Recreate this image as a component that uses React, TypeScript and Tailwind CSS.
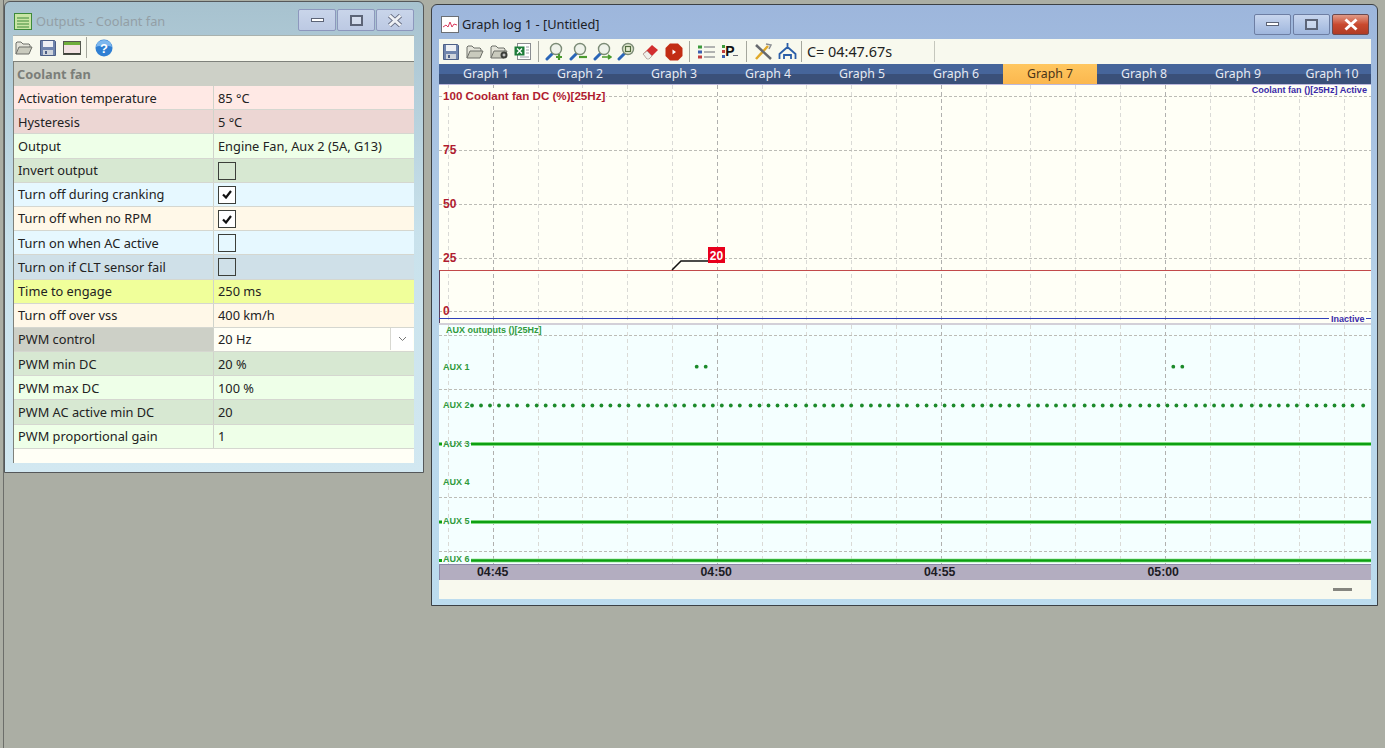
import React from 'react';

const uiFont = 'font-["Noto_Sans",sans-serif]';

type Row = { label: string; value?: string; check?: boolean; bgL: string; bgR?: string; select?: boolean };

const rows: Row[] = [
  { label: 'Activation temperature', value: '85 °C', bgL: 'bg-[#ffe9e5]' },
  { label: 'Hysteresis', value: '5 °C', bgL: 'bg-[#ecd6d3]' },
  { label: 'Output', value: 'Engine Fan, Aux 2 (5A, G13)', bgL: 'bg-[#eeffe8]' },
  { label: 'Invert output', check: false, bgL: 'bg-[#d7e8d2]' },
  { label: 'Turn off during cranking', check: true, bgL: 'bg-[#e6f8ff]' },
  { label: 'Turn off when no RPM', check: true, bgL: 'bg-[#fff8e8]' },
  { label: 'Turn on when AC active', check: false, bgL: 'bg-[#e6f8ff]' },
  { label: 'Turn on if CLT sensor fail', check: false, bgL: 'bg-[#cfe0e8]' },
  { label: 'Time to engage', value: '250 ms', bgL: 'bg-[#f0ff9a]' },
  { label: 'Turn off over vss', value: '400 km/h', bgL: 'bg-[#fff8e8]' },
  { label: 'PWM control', value: '20 Hz', bgL: 'bg-[#cdd0c7]', bgR: 'bg-[#fffff6]', select: true },
  { label: 'PWM min DC', value: '20 %', bgL: 'bg-[#d7e8d2]' },
  { label: 'PWM max DC', value: '100 %', bgL: 'bg-[#eeffe8]' },
  { label: 'PWM AC active min DC', value: '20', bgL: 'bg-[#d7e8d2]' },
  { label: 'PWM proportional gain', value: '1', bgL: 'bg-[#eeffe8]' },
];

const FolderIcon = ({ plus }: { plus?: boolean }) => (
  <svg width="18" height="18" viewBox="0 0 18 18">
    <path d="M1 15V4l1-1h4l2 2h6l1 1v2" fill="#e4e4da" stroke="#6d6f68" />
    <path d="M1 15l3-7h13l-3 7z" fill="#c9cabd" stroke="#6d6f68" />
    {plus && <circle cx="14" cy="12" r="3.5" fill="#3d3f3a" />}
    {plus && <path d="M12.5 12h3M14 10.5v3" stroke="#eee" />}
  </svg>
);

const SaveIcon = () => (
  <svg width="18" height="18" viewBox="0 0 18 18">
    <path d="M1.5 1.5h14l1 1v14h-15z" fill="#6f84ad" stroke="#4d5f86" />
    <rect x="4" y="2" width="10" height="6" fill="#eef0f4" />
    <rect x="4" y="11" width="10" height="5" fill="#cfd4dc" />
    <rect x="6" y="12" width="2" height="3" fill="#4d5f86" />
  </svg>
);

const GridIcon = () => (
  <svg width="18" height="18" viewBox="0 0 18 18">
    <rect x="0.5" y="2.5" width="17" height="13" fill="#f2e2e2" stroke="#55584f" />
    <rect x="1" y="3" width="16" height="3" fill="#6fae3c" />
    <rect x="1" y="14" width="16" height="1.5" fill="#3d4038" />
  </svg>
);

const HelpIcon = () => (
  <svg width="18" height="18" viewBox="0 0 18 18">
    <circle cx="9" cy="9" r="8.5" fill="#2f7fd3" />
    <path d="M1 8a8 7 0 0 1 16 0c-4-2-12-2-16 0z" fill="#7db7ee" />
    <text x="9" y="13.5" textAnchor="middle" fontSize="13" fontWeight="700" fill="#fff" fontFamily="Liberation Sans">?</text>
  </svg>
);

const ZoomIcon = ({ mark }: { mark: 'plus' | 'minus' | 'arrows' | 'box' }) => (
  <svg width="19" height="19" viewBox="0 0 19 19">
    <path d="M2 17l6-6" stroke="#2a66b8" strokeWidth="3" strokeLinecap="round" />
    <circle cx="11" cy="7" r="5.5" fill={mark === 'box' ? '#e5ecd2' : '#eef2ea'} stroke="#7b8b76" strokeWidth="1.4" />
    {mark === 'plus' && <path d="M11 15h6M14 12v6" stroke="#4a9a2e" strokeWidth="2.2" />}
    {mark === 'minus' && <path d="M10 15h8" stroke="#4a9a2e" strokeWidth="2.2" />}
    {mark === 'arrows' && <path d="M9 15h9M15 13l3 2-3 2" stroke="#4a9a2e" strokeWidth="1.6" fill="none" />}
    {mark === 'box' && <rect x="8.5" y="4.5" width="5" height="5" fill="none" stroke="#4f6b3d" strokeWidth="1.2" />}
  </svg>
);

// toolbar cell, keeps the 24px pitch the icons sit on
const Slot = ({ children }: { children: React.ReactNode }) => <div className="w-[24px] shrink-0 flex items-center">{children}</div>;

const WinBtn = ({ kind, active }: { kind: 'min' | 'max' | 'close'; active: boolean }) => {
  const bg =
    kind === 'close' && active
      ? 'bg-linear-to-b from-[#e09a88] via-[#c9492f] to-[#b03b25] border-[#6b4a50]'
      : active
        ? 'bg-linear-to-b from-[#c8d6ee] to-[#9fb6dd] border-[#6d7ea3]'
        : 'bg-linear-to-b from-[#c9d5ea] to-[#bcc9e3] border-[#8d97bd]';
  const size = active ? 'w-[37px] h-[21px]' : 'w-[38px] h-[22px]';
  return (
    <div className={`flex items-center justify-center ${size} border rounded-[2px] ${bg}`}>
      {kind === 'min' && <div className="w-[13px] h-[4px] bg-white border border-[#5c6477]" />}
      {kind === 'max' && <div className="w-[13px] h-[11px] bg-white/30 border-2 border-[#5c6477]" />}
      {kind === 'close' && (
        <svg width="16" height="13" viewBox="0 0 16 13">
          {!active && <path d="M2.5 1.5l11 10M13.5 1.5l-11 10" stroke="#666d82" strokeWidth="4.6" />}
          <path d="M2.5 1.5l11 10M13.5 1.5l-11 10" stroke={active ? '#fff' : '#eef0f4'} strokeWidth="3" />
        </svg>
      )}
    </div>
  );
};

const Checkbox = ({ on }: { on: boolean }) => (
  <div className={`w-[18px] h-[18px] border border-[#3c3f3a] flex items-center justify-center ${on ? 'bg-white' : ''}`}>
    {on && (
      <svg width="10" height="9" viewBox="0 0 10 9">
        <path d="M1 4.5l3 3 5-6.5" fill="none" stroke="#111" strokeWidth="2.2" />
      </svg>
    )}
  </div>
);

const OutputsWindow = () => (
  <div className={`absolute left-[4px] top-[1px] w-[420px] h-[472px] rounded-t-[6px] border border-[#55585a] bg-linear-to-b from-[#a7c2cf] via-[#c9e2ec] to-[#d2e8f1] pl-[8px] pr-[9px] flex flex-col ${uiFont}`}>
    <div className="h-[33px] flex items-center shrink-0 pt-[6px]">
      <svg width="18" height="17" viewBox="0 0 18 17" className="ml-[1px]">
        <rect x="0.5" y="0.5" width="17" height="16" fill="#c9e6a5" stroke="#3e8a3a" />
        <path d="M3 5h12M3 8h12M3 11h12M3 14h12" stroke="#3e8a3a" />
      </svg>
      <span className="ml-[4px] text-[12.8px] text-[#939fa6]">Outputs - Coolant fan</span>
      <div className="ml-auto flex gap-[1px] -mt-[3px]">
        <WinBtn kind="min" active={false} />
        <WinBtn kind="max" active={false} />
        <WinBtn kind="close" active={false} />
      </div>
    </div>
    <div className="h-[26px] bg-[#f8f9ee] flex items-center pl-[2px] pb-[2px] border-t border-[#a9b2ae] shrink-0">
      <Slot><FolderIcon /></Slot>
      <Slot><SaveIcon /></Slot>
      <Slot><GridIcon /></Slot>
      <div className="w-px h-[21px] bg-[#a5a79d] mr-[8px] -ml-[1px]" />
      <HelpIcon />
    </div>
    <div className="flex-1 bg-[#fffff6] border-l border-t border-[#7e817b] mb-[9px] min-h-0 text-[12.8px] text-[#222]">
      <div className="h-[24px] bg-[#cdd0c7] flex items-center pl-[3px] pt-[1px] font-bold text-[#7b7e79]">Coolant fan</div>
      {rows.map((r) => (
        <div key={r.label} className="flex h-[24.2px] border-b border-[#d5d7d0]">
          <div className={`w-[200px] shrink-0 pl-[4px] pt-[1px] flex items-center border-r border-[#d0d3cb] ${r.bgL}`}>{r.label}</div>
          <div className={`flex-1 pl-[4px] pt-[1px] flex items-center ${r.bgR ?? r.bgL}`}>
            {r.check !== undefined ? <Checkbox on={r.check} /> : r.value}
            {r.select && (
              <div className="ml-auto mr-[1px] w-[23px] h-[22px] -mt-[1px] bg-white border-l border-[#d8d8d2] flex items-center justify-center">
                <svg width="9" height="6" viewBox="0 0 9 6">
                  <path d="M1 1l3.5 3.5L8 1" fill="none" stroke="#777" />
                </svg>
              </div>
            )}
          </div>
        </div>
      ))}
    </div>
  </div>
);

const vGrid = Array.from({ length: 21 }, (_, i) => Math.round(9 + i * 44.8) + 0.5);
const majors = [54.5, 278.5, 502.5, 726.5];

const VLines = ({ h }: { h: number }) => (
  <>
    {vGrid.map((x) => (
      <line key={x} x1={x} x2={x} y1={0} y2={h} stroke="#dadad6" strokeDasharray="4 3" />
    ))}
    {majors.map((x) => (
      <line key={x} x1={x} x2={x} y1={0} y2={h} stroke="#b0b0ae" strokeDasharray="4 3" />
    ))}
  </>
);

const HLine = ({ y }: { y: number }) => <line x1={0} x2={932} y1={y} y2={y} stroke="#bcbcb6" strokeDasharray="3 2" />;

const UpperChart = () => (
  <svg width="932" height="238" viewBox="0 0 932 238" className="block bg-[#fffff6] shrink-0" fontFamily="Liberation Sans">
    <VLines h={238} />
    {[11.5, 65.5, 119.5, 173.5, 226.5].map((y) => (
      <HLine key={y} y={y} />
    ))}
    <rect x={3} y={3} width={164} height={15} fill="#fffff6" />
    <text x={4} y={15} fontSize="11.6" fontWeight="700" fill="#b01c30">100 Coolant fan DC (%)[25Hz]</text>
    {[['75', 69], ['50', 123], ['25', 177], ['0', 230]].map(([t, y]) => (
      <text key={t} x={4} y={y as number} fontSize="12" fontWeight="700" fill="#b01c30">{t}</text>
    ))}
    <rect x={810} y={0} width={122} height={10} fill="#fffff6" />
    <text x={928} y={8} textAnchor="end" fontSize="9.1" fontWeight="700" fill="#3a2aa8">Coolant fan ()[25Hz] Active</text>
    <path d="M0 185.5H932" fill="none" stroke="#c24a4a" />
    <path d="M0.5 185.5V238" fill="none" stroke="#5b4060" />
    <path d="M233 185l9-9h27" fill="none" stroke="#111" strokeWidth="1.5" />
    <rect x={269} y={162} width={17} height={16} fill="#e8001c" />
    <text x={277.5} y={174.5} textAnchor="middle" fontSize="12" fontWeight="700" fill="#fff">20</text>
    <path d="M0 233.5H890M927 233.5H932" stroke="#2f3fb8" strokeWidth="1.2" />
    <text x={892} y={236.5} fontSize="9" fontWeight="700" fill="#3a2aa8">Inactive</text>
  </svg>
);

// every sixth gap in the AUX 2 trace is a little wider
const aux2Dots = Array.from({ length: 97 }, (_, i) => 33 + Math.floor(i / 6) * 55.7 + (i % 6) * 9);

const LowerChart = () => (
  <svg width="932" height="239" viewBox="0 0 932 239" className="block bg-[#f4ffff] shrink-0" fontFamily="Liberation Sans">
    <VLines h={239} />
    {[10.5, 64.5, 118.5, 172.5, 226.5].map((y) => (
      <HLine key={y} y={y} />
    ))}
    <text x={7} y={7.5} fontSize="9" fontWeight="700" fill="#2f9a3c">AUX outuputs ()[25Hz]</text>
    {[['AUX 1', 45], ['AUX 2', 83], ['AUX 3', 122], ['AUX 4', 160], ['AUX 5', 199], ['AUX 6', 237]].map(([t, y]) => (
      <text key={t} x={4} y={y as number} fontSize="9" fontWeight="700" fill="#2f9a3c">{t}</text>
    ))}
    {[257.7, 266.7, 734.3, 743.3].map((x) => (
      <circle key={x} cx={x} cy={41.7} r={1.9} fill="#1b8a2a" />
    ))}
    {aux2Dots.map((x) => (
      <circle key={x} cx={x} cy={80.5} r={1.9} fill="#1b8a2a" />
    ))}
    {[119, 197, 235.5].map((y) => (
      <g key={y}>
        <line x1={32} x2={932} y1={y} y2={y} stroke="#a8ecaa" strokeWidth="4" />
        <line x1={32} x2={932} y1={y} y2={y} stroke="#0da012" strokeWidth="2.6" />
        <line x1={0} x2={3} y1={y} y2={y} stroke="#0da012" strokeWidth="3" />
      </g>
    ))}
  </svg>
);

const GraphWindow = () => (
  <div className={`absolute left-[431px] top-[4px] w-[947px] h-[602px] rounded-t-[6px] border border-[#3c4044] bg-linear-to-b from-[#9db6dc] via-[#b8d4ea] to-[#bcdcee] pl-[7px] pr-[6px] flex flex-col ${uiFont}`}>
    <div className="h-[34px] flex items-center shrink-0 pt-[5px]">
      <svg width="18" height="17" viewBox="0 0 18 17" className="ml-[2px]">
        <rect x="0.5" y="0.5" width="17" height="16" fill="#fff" stroke="#6b6f75" />
        <path d="M2 11l3-2 2 2 2-5 2 5 2-3 3 1" fill="none" stroke="#d93a5e" />
      </svg>
      <span className="ml-[3px] text-[12.8px] text-[#1c2026]">Graph log 1 - [Untitled]</span>
      <div className="ml-auto flex gap-[2px] mr-[2px] -mt-[1px]">
        <WinBtn kind="min" active />
        <WinBtn kind="max" active />
        <WinBtn kind="close" active />
      </div>
    </div>
    <div className="h-[25px] bg-[#f8f9ee] flex items-center pl-[3px] shrink-0">
      <Slot><SaveIcon /></Slot>
      <Slot><FolderIcon /></Slot>
      <Slot><FolderIcon plus /></Slot>
      <Slot>
        <svg width="18" height="18" viewBox="0 0 18 18">
          <rect x="3.5" y="0.5" width="13" height="16" fill="#fff" stroke="#8a8d90" />
          <path d="M12 4h3M12 7h3M12 10h3M6 14h9" stroke="#9aa0a6" />
          <rect x="0.5" y="3.5" width="10" height="9" fill="#1e7d3a" />
          <path d="M3 5.5l5 5M8 5.5l-5 5" stroke="#fff" strokeWidth="1.4" />
        </svg>
      </Slot>
      <div className="w-px h-[21px] bg-[#a5a79d] mr-[6px]" />
      <Slot><ZoomIcon mark="plus" /></Slot>
      <Slot><ZoomIcon mark="minus" /></Slot>
      <Slot><ZoomIcon mark="arrows" /></Slot>
      <Slot><ZoomIcon mark="box" /></Slot>
      <Slot>
        <svg width="19" height="19" viewBox="0 0 19 19">
          <path d="M2 12l9-9 6 5-9 9H6z" fill="#d22f2f" />
          <path d="M2 12l4 5h2l3-3-5-5z" fill="#f0f0ea" stroke="#9a9a92" strokeWidth="0.6" />
        </svg>
      </Slot>
      <Slot>
        <svg width="18" height="18" viewBox="0 0 18 18">
          <path d="M5 0.5h8l4.5 4.5v8L13 17.5H5L0.5 13V5z" fill="#c22d14" />
          <path d="M7.5 6.5l3.5 2.5-3.5 2.5z" fill="#fff" />
        </svg>
      </Slot>
      <div className="w-px h-[21px] bg-[#a5a79d] mr-[8px]" />
      <Slot>
        <svg width="17" height="18" viewBox="0 0 17 18">
          <path d="M6 4h11M6 9h11M6 14h11" stroke="#6a6d75" />
          <rect x="0" y="2.5" width="4" height="3" fill="#3c9a3c" />
          <rect x="0" y="7.5" width="4" height="3" fill="#3c5fb0" />
          <rect x="0" y="12.5" width="4" height="3" fill="#c23c3c" />
        </svg>
      </Slot>
      <Slot>
        <svg width="16" height="18" viewBox="0 0 16 18">
          <rect x="0" y="2" width="3" height="3" fill="#3c9a3c" />
          <rect x="0" y="7" width="3" height="3" fill="#c23c3c" />
          <rect x="0" y="12" width="3" height="3" fill="#3c5fb0" />
          <path d="M11 12.5H16" stroke="#6a6d75" />
          <text x="8" y="13" textAnchor="middle" fontSize="14" fontWeight="700" fill="#111" fontFamily="Liberation Sans">P</text>
        </svg>
      </Slot>
      <div className="w-px h-[21px] bg-[#a5a79d] mr-[7px]" />
      <Slot>
        <svg width="19" height="19" viewBox="0 0 19 19">
          <path d="M2 17L14 4" stroke="#e0a92a" strokeWidth="2.5" />
          <path d="M2 3l15 14" stroke="#66696e" strokeWidth="2.5" />
          <path d="M12 2l5 1-2 4" fill="none" stroke="#8b8e92" strokeWidth="1.5" />
        </svg>
      </Slot>
      <Slot>
        <svg width="19" height="19" viewBox="0 0 19 19">
          <path d="M1.5 17V12L9.5 5l8 7v5M9.5 5V1M6 17v-4h7v4" fill="none" stroke="#2a5ea8" strokeWidth="1.8" />
        </svg>
      </Slot>
      <div className="w-px h-[21px] bg-[#a5a79d] mr-[5px] -ml-[1px]" />
      <span className="w-[127px] text-[14.4px] text-[#222] shrink-0">C= 04:47.67s</span>
      <div className="w-px h-[21px] bg-[#c5c7bd]" />
    </div>
    <div className="h-[20px] flex shrink-0 overflow-hidden bg-linear-to-b from-[#46659a] from-50% to-[#3a5079] to-50%">
      {Array.from({ length: 10 }, (_, i) => i + 1).map((n) => (
        <div
          key={n}
          className={`w-[94px] shrink-0 flex items-center justify-center text-[12.3px] ${
            n === 7 ? 'bg-linear-to-b from-[#ffc760] to-[#fbb74e] text-[#4a3418]' : 'text-[#e6eaf2]'
          }`}
        >
          Graph {n}
        </div>
      ))}
    </div>
    <div className="h-px bg-[#bcb8dc] shrink-0" />
    <UpperChart />
    <div className="h-[2px] bg-[#d3d0d8] shrink-0" />
    <LowerChart />
    <div className="h-[16px] bg-[#b3adc0] border-t border-l border-[#8d88a8] flex pl-[37px] font-['Liberation_Sans',sans-serif] text-[12.3px] font-bold text-[#1c1c24] shrink-0">
      {['04:45', '04:50', '04:55', '05:00'].map((t) => (
        <div key={t} className="w-[224.4px] leading-[15px]">{t}</div>
      ))}
    </div>
    <div className="h-[19px] bg-[#f8f9ee] flex items-center justify-end pr-[19px] shrink-0">
      <div className="w-[19px] h-[3px] bg-[#85857f]" />
    </div>
  </div>
);

export default function App() {
  return (
    <div className="relative w-[1385px] h-[748px] overflow-hidden bg-[#abaea4]">
      <div className="absolute left-[3px] top-0 w-px h-full bg-[#6c6e6a]" />
      <OutputsWindow />
      <GraphWindow />
    </div>
  );
}
